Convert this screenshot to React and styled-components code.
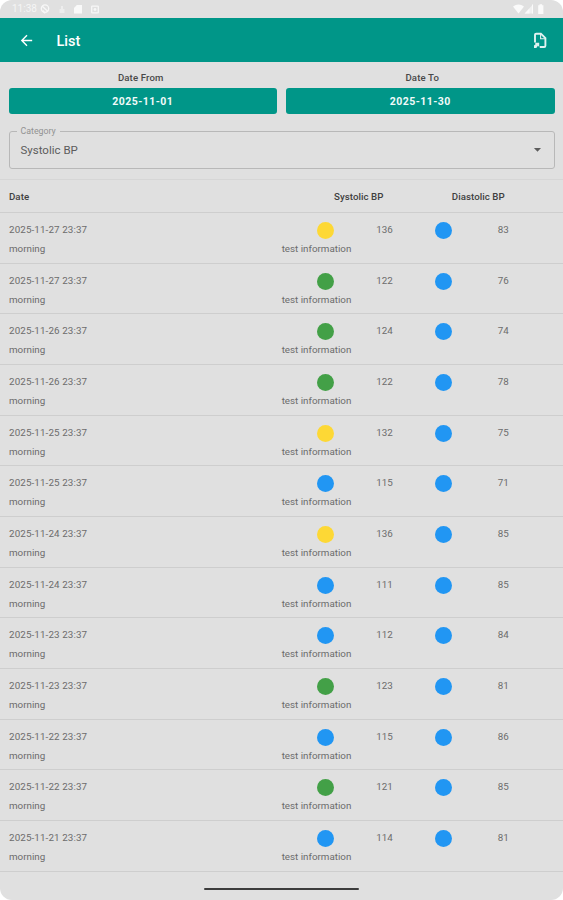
import {MdArrowBack, MdArrowDropDown} from 'react-icons/md';
import styled, {createGlobalStyle} from 'styled-components';

const records = [
    {date: '2025-11-27 23:37', sys: 136, color: 'yellow', dia: 83},
    {date: '2025-11-27 23:37', sys: 122, color: 'green', dia: 76},
    {date: '2025-11-26 23:37', sys: 124, color: 'green', dia: 74},
    {date: '2025-11-26 23:37', sys: 122, color: 'green', dia: 78},
    {date: '2025-11-25 23:37', sys: 132, color: 'yellow', dia: 75},
    {date: '2025-11-25 23:37', sys: 115, color: 'blue', dia: 71},
    {date: '2025-11-24 23:37', sys: 136, color: 'yellow', dia: 85},
    {date: '2025-11-24 23:37', sys: 111, color: 'blue', dia: 85},
    {date: '2025-11-23 23:37', sys: 112, color: 'blue', dia: 84},
    {date: '2025-11-23 23:37', sys: 123, color: 'green', dia: 81},
    {date: '2025-11-22 23:37', sys: 115, color: 'blue', dia: 86},
    {date: '2025-11-22 23:37', sys: 121, color: 'green', dia: 85},
    {date: '2025-11-21 23:37', sys: 114, color: 'blue', dia: 81},
];

const dotColors = {
    yellow: '#fdd835',
    green: '#43a047',
    blue: '#2196f3',
};

const StatusIcons = () => (
    <>
        <svg width='10' height='10' viewBox='0 0 10 10' fill='none' stroke='#f7f7f7' strokeWidth='1.3'>
            <circle cx='5' cy='4.6' r='3.7' />
            <path d='M2.3 2.2l5.6 5.2M3 6.5l2 2.8' />
        </svg>
        <svg width='6' height='9' viewBox='0 0 6 9' fill='#ededed'>
            <path d='M2 1h2v3h1.5v4h-5V4H2z' />
        </svg>
        <svg width='8' height='9' viewBox='0 0 8 9' fill='#f9f9f9'>
            <path d='M2.8 0H8v8.5H0V3z' />
        </svg>
        <svg width='8' height='9' viewBox='0 0 8 9'>
            <rect x='.7' y='1.1' width='6.6' height='6.8' rx='.6' fill='none' stroke='#f7f7f7' strokeWidth='1.3' />
            <circle cx='4' cy='4.5' r='1.4' fill='#f7f7f7' />
        </svg>
    </>
);

const SignalIcons = () => (
    <svg width='33' height='11' viewBox='0 0 33 11' fill='#fafafa'>
        <path d='M0 2.4Q5.5-1.6 11 2.4L5.5 9.4z' />
        <path d='M20 .5v9h-8.5z' fill='#f0f0f0' />
        <path d='M16.5 4.4v5h-4.8zM19 .5h1v9h-1z' />
        <path d='M26.5.2h2.6v1h1.3v8.9h-5.2V1.2h1.3z' />
    </svg>
);

const FileIcon = () => (
    <svg width='15' height='17' viewBox='0 0 15 17' fill='none' stroke='#e0f2f0' strokeWidth='1.9'>
        <path d='M2 10.4V3Q2 1.7 3.3 1.7h4.6L12.4 6.2v7.5q0 1.3-1.3 1.3H6.8' />
        <path d='M7.6 2v4.7h4.6' strokeWidth='1.1' />
        <path d='M1 15.9v-2.4l1.7-1.6-.9-1.1h4.4v4.2l-1.3-1.2-1.6 2.1z' fill='#e0f2f0' stroke='none' />
    </svg>
);

const App = () => {
    return (
        <Screen>
            <GlobalStyle />
            <StatusBar>
                <StatusGroup>
                    <Clock>11:38</Clock>
                    <StatusIcons />
                </StatusGroup>
                <SignalIcons />
            </StatusBar>
            <AppBar>
                <IconButton aria-label='back'>
                    <MdArrowBack size={17} />
                </IconButton>
                <Title>List</Title>
                <IconButton aria-label='export'>
                    <FileIcon />
                </IconButton>
            </AppBar>
            <DateLabels>
                <span>Date From</span>
                <span>Date To</span>
            </DateLabels>
            <DateButtons>
                <DateButton>2025-11-01</DateButton>
                <DateButton>2025-11-30</DateButton>
            </DateButtons>
            <Category>
                <legend>Category</legend>
                <span>Systolic BP</span>
                <MdArrowDropDown size={17} />
            </Category>
            <TableHead>
                <HeadCell>Date</HeadCell>
                <HeadCell $center>Systolic BP</HeadCell>
                <HeadCell $center>Diastolic BP</HeadCell>
            </TableHead>
            {records.map((item, index) => (
                <Row key={index}>
                    <Cell>{item.date}</Cell>
                    <Dot $color={dotColors[item.color]} />
                    <Cell $center>{item.sys}</Cell>
                    <Dot $color={dotColors.blue} />
                    <Cell $center>{item.dia}</Cell>
                    <Note>
                        <span>morning</span>
                        <span>test information</span>
                    </Note>
                </Row>
            ))}
            <NavArea>
                <NavHandle />
            </NavArea>
        </Screen>
    );
};

const GlobalStyle = createGlobalStyle`
    * {
        box-sizing: border-box;
    }
    body {
        margin: 0;
        background: #fff;
        font-family: Roboto, 'Liberation Sans', sans-serif;
    }
    button {
        border: 0;
        padding: 0;
        font-family: inherit;
    }
`;

const Screen = styled.div`
    display: flex;
    flex-direction: column;
    width: 563px;
    height: 900px;
    overflow: hidden;
    border-radius: 12px;
    background: #e0e0e0;
`;

const StatusBar = styled.div`
    display: flex;
    align-items: center;
    justify-content: space-between;
    flex: none;
    height: 18px;
    padding: 0 17px 0 12px;
`;

const StatusGroup = styled.div`
    display: flex;
    align-items: center;

    svg + svg {
        margin-left: 9px;
    }
`;

const Clock = styled.span`
    width: 28px;
    color: #f5f5f5;
    font-size: 10px;
    line-height: 12px;
`;

const AppBar = styled.header`
    display: flex;
    align-items: center;
    flex: none;
    height: 44px;
    padding: 0 15px 0 17.5px;
    background: #009688;
    color: #fff;
`;

const IconButton = styled.button`
    display: flex;
    background: transparent;
    color: inherit;
`;

const Title = styled.h1`
    flex: 1;
    margin: 3px 0 0 22px;
    font-size: 14.5px;
    font-weight: 500;
    line-height: 18px;
`;

const DateLabels = styled.div`
    display: grid;
    grid-template-columns: 1fr 1fr;
    flex: none;
    padding: 10px 0 4px;
    color: #484848;
    font-size: 9.6px;
    font-weight: 500;
    letter-spacing: 0.15px;
    line-height: 12px;
    text-align: center;
`;

const DateButtons = styled.div`
    display: grid;
    grid-template-columns: 1fr 1fr;
    flex: none;
    gap: 9px;
    padding: 0 8.5px;
`;

const DateButton = styled.button`
    height: 26px;
    border-radius: 3px;
    background: #009688;
    color: #f1faf9;
    font-size: 10.5px;
    font-weight: 700;
    letter-spacing: 0.45px;
`;

const Category = styled.fieldset`
    display: flex;
    align-items: center;
    justify-content: space-between;
    flex: none;
    height: 43px;
    min-width: 0;
    margin: 12px 8.5px 0;
    padding: 0 8px 0 11px;
    border: 1px solid #b8b8b8;
    border-radius: 3px;
    color: #5c5c5c;
    font-size: 11.5px;

    span,
    svg {
        margin-top: 5px;
    }

    legend {
        height: 10px;
        margin-left: -4px;
        padding: 0 4px;
        color: #929292;
        font-size: 8.8px;
        line-height: 10px;
    }
`;

const TableHead = styled.div`
    display: grid;
    grid-template-columns: 1fr 119.5px 119.5px;
    align-items: center;
    flex: none;
    height: 34px;
    margin-top: 10px;
    padding: 0 25px 0 9px;
    border-top: 1px solid #d6d6d6;
    border-bottom: 1px solid #cecece;
`;

const HeadCell = styled.span`
    color: #404040;
    font-size: 9.7px;
    font-weight: 500;
    letter-spacing: 0.05px;
    text-align: ${(props) => (props.$center ? 'center' : 'left')};
`;

const Row = styled.div`
    display: grid;
    grid-template-columns: 1fr repeat(4, 59.4px);
    grid-template-rows: 17px 12px;
    row-gap: 4px;
    flex: none;
    height: 50.67px;
    padding: 9px 30px 0 9px;
    border-bottom: 1px solid #cecece;
`;

const Cell = styled.span`
    color: #6c6c6c;
    font-size: 9.8px;
    letter-spacing: ${(props) => (props.$center ? '0' : '0.12px')};
    line-height: 15px;
    text-align: ${(props) => (props.$center ? 'center' : 'left')};
`;

const Dot = styled.span`
    justify-self: center;
    width: 17px;
    height: 17px;
    border-radius: 50%;
    background: ${(props) => props.$color};
`;

const Note = styled.div`
    display: flex;
    justify-content: space-between;
    grid-column: 1 / 3;
    padding-right: 3.5px;
    color: #6c6c6c;
    font-size: 9.8px;
    line-height: 12px;
`;

const NavArea = styled.div`
    display: flex;
    align-items: center;
    justify-content: center;
    flex: 1;
    padding-top: 6px;
`;

const NavHandle = styled.div`
    width: 155px;
    height: 2.5px;
    border-radius: 2px;
    background: #3c3c3c;
`;

export default App;
